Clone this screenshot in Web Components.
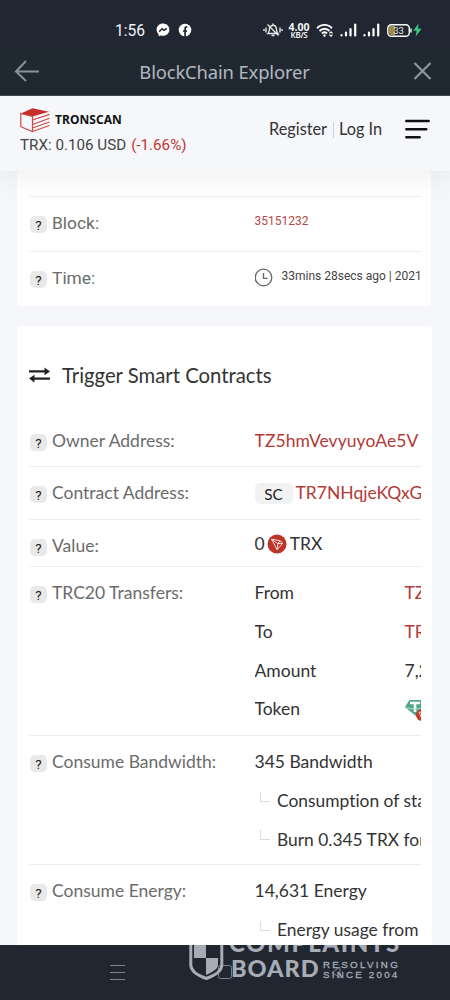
<!DOCTYPE html>
<html lang="en">
<head>
<meta charset="utf-8">
<title>BlockChain Explorer</title>
<style>
html,body{margin:0;padding:0}
body{width:450px;height:1000px;overflow:hidden;background:#f4f6fa;font-family:Lato,sans-serif;color:#333}
</style>
</head>
<body>
<phone-screen>
  <status-bar></status-bar>
  <title-bar>BlockChain Explorer</title-bar>
  <site-header></site-header>
  <scroll-area>
    <info-card class="top">
      <info-row label="Block:" plain style="height:55px"><small-value red>35151232</small-value></info-row>
      <info-row label="Time:" plain style="height:54px"><small-value clock>33mins 28secs ago | 2021</small-value></info-row>
    </info-card>
    <info-card heading="Trigger Smart Contracts">
      <info-row label="Owner Address:" first style="height:52px"><info-line red style="letter-spacing:.07px">TZ5hmVevyuyoAe5V</info-line></info-row>
      <info-row label="Contract Address:" style="height:53px"><info-line red><sc-tag>SC</sc-tag>TR7NHqjeKQxG</info-line></info-row>
      <info-row label="Value:" style="height:47px"><info-line style="height:33px;line-height:33px">0<trx-icon></trx-icon>TRX</info-line></info-row>
      <info-row label="TRC20 Transfers:" style="height:169px">
        <info-pair name="From"><info-line red>TZ</info-line></info-pair>
        <info-pair name="To"><info-line red>TR</info-line></info-pair>
        <info-pair name="Amount"><info-line>7,2</info-line></info-pair>
        <info-pair name="Token"><token-icon></token-icon></info-pair>
      </info-row>
      <info-row label="Consume Bandwidth:" style="height:129px">
        <info-line>345 Bandwidth</info-line>
        <info-line branch>Consumption of sta</info-line>
        <info-line branch>Burn 0.345 TRX for</info-line>
      </info-row>
      <info-row label="Consume Energy:" style="height:120px">
        <info-line>14,631 Energy</info-line>
        <info-line branch>Energy usage from</info-line>
      </info-row>
    </info-card>
  </scroll-area>
  <system-nav></system-nav>
</phone-screen>
<script>
function define(name, html) {
  customElements.define(name, class extends HTMLElement {
    constructor() {
      super();
      const t = document.createElement('template');
      t.innerHTML = typeof html === 'function' ? html(this) : html;
      this.attachShadow({mode: 'open'}).appendChild(t.content.cloneNode(true));
    }
  });
}

define('phone-screen', `<style>:host{display:flex;flex-direction:column;width:450px;height:1000px;overflow:hidden}</style><slot></slot>`);

define('status-bar', `<style>
:host{display:block;height:46px;background:#202733;color:#f3f4f6;flex:none}
.bar{display:flex;align-items:center;height:28px;padding:16px 28px 0 115px}
.time{font:15.6px/28px Roboto,sans-serif;width:41px;position:relative;top:1px}
svg{display:block;flex:none}
.rate{text-align:center;width:24px;margin-left:4px}
.rate b{display:block;font:700 10.500px/10px "Noto Sans",sans-serif;height:9px}
.rate span{font:600 8px/8px "Noto Sans",sans-serif;display:block;letter-spacing:-.3px}
.bat{position:relative}
.bat span{position:absolute;left:0;width:23px;top:0;text-align:center;font:9.5px/13px Roboto,sans-serif;color:#e8e8e8}
</style><div class="bar"><span class="time">1:56</span>
<svg width="14" height="14" viewBox="0 0 14 14"><path d="M7 .6C3.300.6.6 3.200.6 6.700c0 1.800.8 3.400 2 4.500l.1 2 1.900-.8c.7.2 1.500.3 2.400.3 3.700 0 6.400-2.700 6.400-6S10.700.6 7 .6z" fill="#fff"/><path d="M3.200 8.700 6 5.700l2 1.700L10.800 5.300" fill="none" stroke="#202733" stroke-width="1.500"/></svg>
<svg width="14" height="14" viewBox="0 0 14 14" style="margin-left:8px"><circle cx="7" cy="7" r="6.300" fill="#fff"/><path d="M7.100 13.500V5.700c0-1.300.7-1.900 2.200-1.700M4.900 8h4.200" fill="none" stroke="#202733" stroke-width="1.700"/></svg>
<svg width="20" height="16" viewBox="0 0 20 16" style="margin-left:71px" fill="none" stroke="#e5e7ea" stroke-width="1.400"><path d="M5 11.500c1.600-1.500 1-4 1.800-5.900C7.500 4 8.700 3.200 10 3.200s2.700.8 3.200 2.600c.6 2 0 4.200 1.800 5.700zM8.500 13.500h3M4.500 2.500l11 11M10 1.500v2M3 5.500v5M1 7v2M17 5.500v5M19 7v2"/></svg>
<div class="rate"><b>4.00</b><span>KB/S</span></div>
<svg width="18" height="15" viewBox="0 0 18 15" style="margin-left:5px" fill="none" stroke="#fff" stroke-width="1.900"><path d="M1 5.300C5 .7 12 .7 16 5.300M3.500 8c3-3 7-3 10 0M6 10.500c1.500-1.400 3.500-1.400 5 0"/><circle cx="8.500" cy="12.500" r="1.200" fill="#fff" stroke="none"/><path d="M13.500 10.300l1.500-1.500 1.500 1.500M13.500 11.700l1.500 1.500 1.500-1.500" stroke-width="1.200"/></svg>
<svg width="17" height="14" viewBox="0 0 17 14" style="margin-left:6px" fill="none" stroke="#fff" stroke-width="2.200" stroke-linecap="round"><path d="M1.500 12v.5M6 9.500v3M10.500 6v6.500M15.200 1.500v11"/></svg>
<svg width="17" height="14" viewBox="0 0 17 14" style="margin-left:6px" fill="none" stroke="#fff" stroke-width="2.200" stroke-linecap="round"><path d="M1.500 12v.5M6 9.500v3M10.500 6v6.500M15.200 1.500v11"/></svg>
<div class="bat" style="margin-left:7px"><svg width="25" height="13" viewBox="0 0 25 13"><path d="M2 2h6v9H4a2 2 0 0 1-2-2z" fill="#a08b45"/><rect x=".8" y=".8" width="21.500" height="11.400" rx="3.500" fill="none" stroke="#fff" stroke-width="1.400"/><path d="M24 4.500v4" stroke="#fff" stroke-width="1.400"/></svg><span>33</span></div>
<svg width="9" height="14" viewBox="0 0 9 14" style="margin-left:1px"><path d="M5.500.5.300 7.800h3.300L2.700 13.500 8.600 5.800H5z" fill="#38c987"/></svg>
</div>`);

define('title-bar', `<style>
:host{display:block;height:50px;background:#202832;flex:none;border-bottom:1px solid #454954;box-sizing:border-box}
.bar{display:flex;justify-content:space-between;align-items:center;height:49px;padding:0 18px 0 14px}
span{font:18.400px/50px "Noto Sans",sans-serif;color:#b4b8bf;position:relative;top:1px;left:-2px;letter-spacing:-.14px}
</style><div class="bar">
<svg width="26" height="24" viewBox="0 0 26 24" fill="none" stroke="#8a9199" stroke-width="2"><path d="M12 2 2 12.500 12 22M2 12.500h23"/></svg>
<span><slot></slot></span>
<svg width="19" height="20" viewBox="0 0 19 20" fill="none" stroke="#8f959d" stroke-width="2.200"><path d="M1.500 2 17.500 18M17.500 2 1.500 18"/></svg></div>`);

define('site-header', `<style>
:host{display:block;height:75px;background:#f5f7fb;flex:none;position:relative;z-index:1;box-shadow:0 4px 28px rgba(0,0,0,.07)}
.bar{display:flex;padding:0 20px;height:66px}
.left{width:249px;padding-top:11px}
.logo{display:flex;align-items:center;height:26px}
b{font:700 12px/24px "Noto Sans",sans-serif;color:#111;margin-left:5px;letter-spacing:.05px}
.price{font:15.200px/22px Roboto,sans-serif;color:#444;white-space:nowrap;position:relative;top:1px}
.price i{font-style:normal;color:#c23631;margin-left:5px}
.links{font:16.300px/65px Lato,sans-serif;color:#333;width:136px;white-space:nowrap}
.links i{display:inline-block;width:1px;height:16px;background:#d0d2d5;margin:0 5px 0 6px;vertical-align:-3px}
svg{display:block;flex:none}
</style><div class="bar"><div class="left"><div class="logo">
<svg width="30" height="26" viewBox="0 0 30 26"><path d="M.8 6.500 12.500 1.200 29 4.800 12.500 9.500z" fill="#c6302a"/><g fill="none" stroke="#c94c47" stroke-width="1.200"><path d="M.8 6.500v13.200l11.700 4.800V9.500zM12.500 13 29.500 7.400M12.500 17.500l17-6.200M12.500 21l17-6M12.500 24.500l17-6"/></g></svg><b>TRONSCAN</b></div>
<div class="price">TRX: 0.106 USD<i>(-1.66%)</i></div></div>
<div class="links">Register<i></i>Log In</div>
<svg width="25" height="20" viewBox="0 0 25 20" style="margin-top:23px" stroke="#111" stroke-width="2.400" stroke-linecap="round"><path d="M1.300 2h22.400M1.300 10.200h20M1.300 18.200h13.400"/></svg></div>`);

define('scroll-area', `<style>:host{display:flex;flex-direction:column;gap:20px;height:774px;flex:none;overflow:hidden;padding:0 18px 0 17px}</style><slot></slot>`);

define('info-card', el => `<style>
:host{display:block;background:#fff;border-radius:3px;padding:0 11px 0 12px;flex:none}
:host(.top){padding-top:25px;height:110px;margin-right:1px;padding-right:10px}
h2{display:flex;align-items:center;font:20.300px/24px Lato,sans-serif;color:#333;margin:0;padding:37px 0 27px}
svg{margin-right:12px}
</style>${el.hasAttribute('heading') ? `<h2><svg width="21" height="16" viewBox="0 0 21 16"><path d="M0 4.400h17M4 11.600h17" stroke="#222" stroke-width="2.200"/><path d="M15.500.5 21 4.400l-5.500 3.900zM5.500 7.700 0 11.600l5.500 3.900z" fill="#222"/></svg>${el.getAttribute('heading')}</h2>` : ''}<slot></slot>`);

define('help-badge', `<style>:host{display:block;width:17px;height:17px;border-radius:5px;background:#e9e9e9;font:400 13.500px/18px Roboto,sans-serif;color:#222;text-align:center}</style>?`);

define('info-row', el => `<style>
:host{display:flex;box-sizing:border-box;border-top:1px solid #ebecee;padding-top:6px;overflow:hidden}
:host([first]){border-color:transparent}
.label{display:flex;width:225.500px;flex:none;font:17.500px/40px Lato,sans-serif;color:#6b6b6b;white-space:nowrap}
:host([plain]) .label{font-family:Roboto,sans-serif;font-size:17.400px}
help-badge{margin:13px 5px 0 1px}
.value{flex:1;min-width:0;overflow:hidden;padding-top:1px}
:host([plain]) .value{padding-top:0}
</style><div class="label"><help-badge></help-badge>${el.getAttribute('label')}</div><div class="value"><slot></slot></div>`);

define('small-value', el => `<style>
:host{display:flex;align-items:center;height:37px;font:12px/37px Roboto,sans-serif;color:#444;white-space:nowrap}
:host([red]){color:#b84744}
svg{margin:1px 9px 0 -1px;flex:none}
</style>${el.hasAttribute('clock') ? '<svg width="19" height="19" viewBox="0 0 19 19" fill="none" stroke="#666" stroke-width="1.300"><circle cx="9.500" cy="9.500" r="8.300"/><path d="M9.500 5v5.300h4"/></svg>' : ''}<slot></slot>`);

define('info-line', `<style>
:host{display:flex;align-items:center;height:38.800px;font:17.500px/38.800px Lato,sans-serif;font-variant-ligatures:no-common-ligatures;color:#333;white-space:nowrap}
:host([red]){color:#b23a38}
:host([branch]){font-size:17.400px}
i{display:none;width:9px;height:9px;border-left:1.500px solid #ddd;border-bottom:1.500px solid #ddd;margin:-9px 7px 0 5.500px;flex:none}
:host([branch]) i{display:block}
</style><i></i><slot></slot>`);

define('info-pair', el => `<style>
:host{display:grid;grid-template-columns:150px 1fr;height:38.800px;overflow:hidden}
</style><info-line>${el.getAttribute('name')}</info-line><slot></slot>`);

define('sc-tag', `<style>:host{display:block;flex:none;width:38px;height:21px;border-radius:5px;background:#f1f2f3;color:#222;font:15.300px/22px Lato,sans-serif;text-align:center;margin-right:3px}</style><slot></slot>`);

define('trx-icon', `<style>:host{display:block;width:20px;height:20px;margin:0 3px 0 2px}svg{display:block}</style>
<svg width="20" height="20" viewBox="0 0 20 20"><circle cx="10" cy="10" r="9.500" fill="#bd3529"/><path d="M4.500 5.200 13 6.700l2.700 2.500-5.600 6.500zM4.500 5.200 10.800 9.700l-.7 6M10.800 9.700 13 6.700M10.800 9.700l4.900-.5" fill="none" stroke="#f6d9d5" stroke-width="1"/></svg>`);

define('token-icon', `<style>:host{display:block;padding-top:9px}svg{display:block}</style>
<svg width="26" height="24" viewBox="0 0 26 24"><path d="M4.500 1h15L24 8 12 18 0 8z" fill="#50a58d"/><path d="M5 4h10M10 4v9" stroke="#fff" stroke-width="2.600"/><path d="M2 8.500c5 2 12 2 18 0" stroke="#b9ddd3" fill="none"/><circle cx="17" cy="16" r="6" fill="#bd3c26"/><path d="m14 13 6 1-3 6z" stroke="#f6c8b5" fill="none"/></svg>`);

define('system-nav', `<style>
:host{display:block;height:55px;background:#202731;flex:none;position:relative;overflow:hidden}
.keys{display:flex;padding:19px 0 0 109px}
.mark{position:absolute;left:189px;top:-20px;width:230px;height:60px;color:#a7adb6}
.mark>*{position:absolute;white-space:nowrap}
.c{left:40px;top:4px;font:900 24px/28px Lato,sans-serif;letter-spacing:1.600px}
.b{left:42px;top:29px;font:900 23.500px/28px Lato,sans-serif;letter-spacing:1px}
.r{left:134px;top:34px;font:400 9.800px/11px "Liberation Sans",sans-serif;letter-spacing:2.300px}
.s{left:134px;top:44px;font:400 9.800px/11px "Liberation Sans",sans-serif;letter-spacing:2.200px}
.r,.s{-webkit-text-stroke:.3px #a7adb6}
</style><div class="keys"><svg width="250" height="18" viewBox="0 0 250 18" fill="none" stroke="#7d848e" stroke-width="1"><path d="M1 1.500h15M1 8.500h15M1 15.500h15"/><rect x="109.500" y="1.500" width="13" height="13" rx="2"/><path d="m231 3-8 5.500 8 5.500z" /></svg></div>
<div class="mark">
<svg style="left:0;top:0" width="36" height="56" viewBox="0 0 36 56"><path d="M1.800 0v40c0 6.500 7 10.500 15.500 13.500 8.500-3 15.500-7 15.500-13.500V0" fill="none" stroke="#a7adb6" stroke-width="3"/><path d="M5 12h12v21H5zM17 33h12v7c0 4-6 7.500-12 10z" fill="#a7adb6"/></svg>
<span class="c">COMPLAINTS</span><span class="b">BOARD</span><span class="r">RESOLVING</span><span class="s">SINCE 2004</span></div>`);
</script>
</body>
</html>
